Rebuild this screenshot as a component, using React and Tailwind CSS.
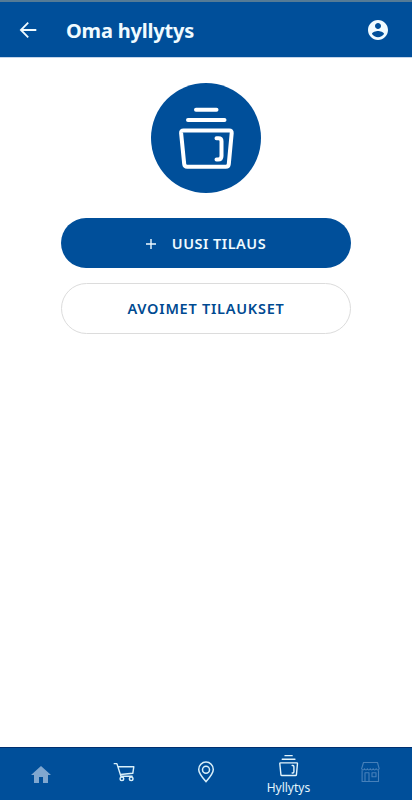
function ArrowIcon() {
  return (
    <svg width="24" height="24" viewBox="0 0 24 24" fill="none" stroke="currentColor" strokeWidth="1.8">
      <path d="M20.3 12H5M12.2 4.6 4.9 12l7.3 7.4" />
    </svg>
  )
}

function AccountIcon() {
  return (
    <svg width="24" height="24" viewBox="0 0 24 24" fill="currentColor">
      <path d="M12 2C6.48 2 2 6.48 2 12s4.48 10 10 10 10-4.48 10-10S17.52 2 12 2zm0 3c1.66 0 3 1.34 3 3s-1.34 3-3 3-3-1.34-3-3 1.34-3 3-3zm0 14.2c-2.5 0-4.71-1.28-6-3.22.03-1.99 4-3.08 6-3.08 1.99 0 5.97 1.09 6 3.08-1.29 1.94-3.5 3.22-6 3.22z" />
    </svg>
  )
}

function ShelfIcon({ className, strokeWidth }) {
  return (
    <svg
      className={className}
      viewBox="0 0 60 66"
      fill="none"
      stroke="currentColor"
      strokeWidth={strokeWidth}
      strokeLinecap="round"
      strokeLinejoin="round"
    >
      <path d="M20 4.7h20.5M12 15h36.5" />
      <path d="M7.5 25.4h45.8q2.6 0 2.4 2.6l-2.9 31q-.3 2.7-3 2.7H11.2q-2.7 0-3-2.7L5.1 28q-.2-2.6 2.4-2.6z" />
      <path d="M40.5 33.2h2q3 0 3 3V51q0 3.5-3.5 3.5h-1.5" />
    </svg>
  )
}

function HomeIcon() {
  return (
    <svg width="24" height="24" viewBox="0 0 24 24" fill="currentColor">
      <path d="M10 20v-6h4v6h5v-8h3L12 3 2 12h3v8z" />
    </svg>
  )
}

function CartIcon() {
  return (
    <svg width="24" height="24" viewBox="0 0 24 24" fill="none" stroke="currentColor" strokeWidth="1.4" strokeLinejoin="round">
      <path d="M1.7 3.6h3.2l4 12.7M6 6.8h15.8l-1 6.5-12.3 1.2M8.4 16.2h12.2" />
      <circle cx="9.9" cy="18.8" r="1.8" />
      <circle cx="19.2" cy="18.8" r="1.8" />
    </svg>
  )
}

function PinIcon() {
  return (
    <svg width="24" height="24" viewBox="0 0 24 24" fill="none" stroke="currentColor" strokeWidth="1.5" strokeLinejoin="round">
      <path d="M12 21.7C9.4 18.6 4.7 13.3 4.7 9.4a7.3 7.3 0 0 1 14.6 0c0 3.9-4.7 9.2-7.3 12.3z" />
      <circle cx="12" cy="9.7" r="3.5" />
    </svg>
  )
}

function StoreIcon() {
  return (
    <svg width="24" height="24" viewBox="0 0 24 24" fill="none" stroke="currentColor" strokeWidth="1.1" strokeLinejoin="round">
      <path d="M4.5 2.5h14l1.7 6.3q-1.5 2.4-3 0-1.5 2.4-3 0-1.4 2.4-2.9 0-1.4 2.4-2.9 0-1.4 2.4-2.9 0-1.4 2.4-2.9 0z" />
      <path d="M3.1 10.3v11.2h16.4V10.3" />
      <path d="M6 21.5v-8.7h4v8.7M13 12.8h4v4h-4z" />
    </svg>
  )
}

const tabs = [
  { id: 'home', icon: <HomeIcon />, style: 'text-[#80a7cf] pt-px' },
  { id: 'cart', icon: <CartIcon />, style: 'text-[#d9f0fa] pb-1' },
  { id: 'stores', icon: <PinIcon />, style: 'text-[#d9f0fa] pb-1' },
  {
    id: 'shelf',
    icon: <ShelfIcon className="h-[23px] w-[21px]" strokeWidth="4" />,
    label: 'Hyllytys',
    style: 'text-[#e4f5fc]',
  },
  { id: 'shop', icon: <StoreIcon />, style: 'text-[#4680ba] pb-1' },
]

export default function App() {
  return (
    <div className="flex h-screen flex-col overflow-hidden bg-white font-['Noto_Sans',sans-serif]">
      <header className="flex h-[57px] shrink-0 items-center border-t-2 border-[#557b96] bg-[#004f9a] pr-[22px] pl-4 text-[#f0fbff]">
        <button className="pt-px" aria-label="Takaisin">
          <ArrowIcon />
        </button>
        <h1 className="ml-[26px] flex-1 pt-[3px] text-[20px] leading-6 font-bold tracking-[-0.2px] whitespace-nowrap">Oma hyllytys</h1>
        <button className="-mr-[10px] w-[34px] pt-px" aria-label="Profiili">
          <AccountIcon />
        </button>
      </header>

      <main className="flex flex-1 flex-col items-center border-t border-[#c3d5ea] px-[61px] pt-[25px]">
        <div className="flex size-[110px] items-center justify-center rounded-full bg-[#004f9a] text-white">
          <ShelfIcon className="h-[66px] w-[60px]" strokeWidth="4" />
        </div>
        <button className="mt-[25px] flex h-[50px] w-full items-center justify-center rounded-full bg-[#004f9a] pt-px text-[14.5px] font-semibold tracking-[0.5px] text-[#eefaff]">
          <svg className="mr-[16px]" width="10" height="10" viewBox="0 0 10 10" stroke="currentColor" strokeWidth="1.4">
            <path d="M5 0v10M0 5h10" />
          </svg>
          UUSI TILAUS
        </button>
        <button className="mt-[15px] h-[51px] w-full rounded-full border border-[#dcdcdc] text-[14.5px] font-semibold tracking-[0.75px] text-[#004a91]">
          AVOIMET TILAUKSET
        </button>
      </main>

      <nav className="grid h-[53px] shrink-0 grid-cols-5 border-t border-[#002f70] bg-[#004f9a]">
        {tabs.map(({ id, icon, label, style }) => (
          <button key={id} className={`flex flex-col items-center ${label ? 'justify-start pt-[6px]' : 'justify-center'} ${style}`}>
            {icon}
            {label && <span className="mt-[3px] text-[12px] leading-4">{label}</span>}
          </button>
        ))}
      </nav>
    </div>
  )
}
